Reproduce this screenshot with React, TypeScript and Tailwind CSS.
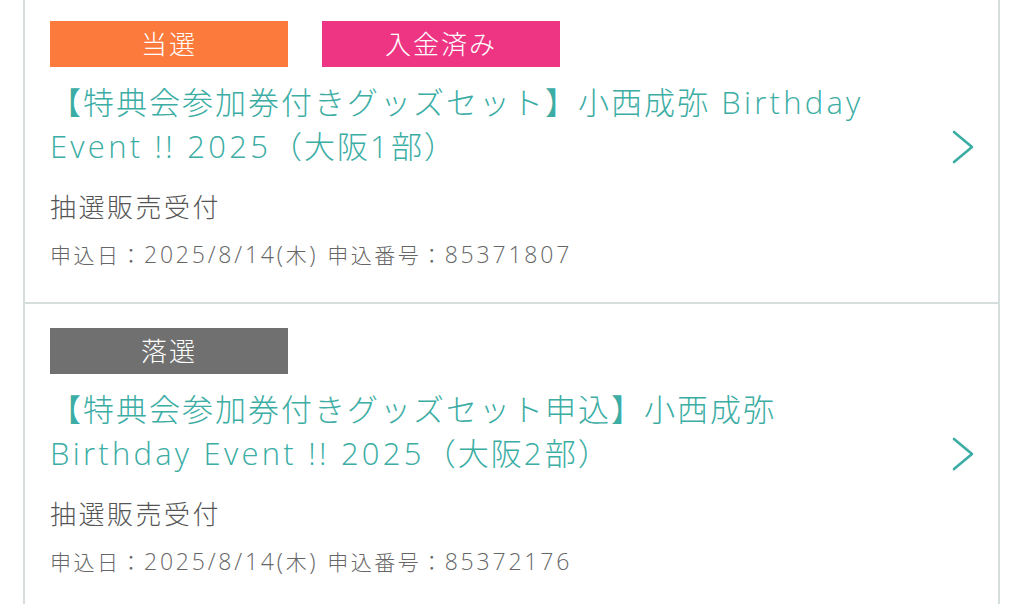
import React from 'react';

interface Badge {
  label: string;
  color: string;
}

interface Entry {
  badges: Badge[];
  titleLines: string[];
  kind: string;
  date: string;
  number: string;
}

const entries: Entry[] = [
  {
    badges: [
      { label: '当選', color: 'bg-[#fd7a3d]' },
      { label: '入金済み', color: 'bg-[#ee3584]' },
    ],
    titleLines: ['【特典会参加券付きグッズセット】小西成弥 Birthday', 'Event !! 2025（大阪1部）'],
    kind: '抽選販売受付',
    date: '2025/8/14(木)',
    number: '85371807',
  },
  {
    badges: [{ label: '落選', color: 'bg-[#707070]' }],
    titleLines: ['【特典会参加券付きグッズセット申込】小西成弥', 'Birthday Event !! 2025（大阪2部）'],
    kind: '抽選販売受付',
    date: '2025/8/14(木)',
    number: '85372176',
  },
];

// Latin runs get wider letter spacing than kana/kanji, the way the app's font sets them
const Mixed: React.FC<{ text: string; latin: string }> = ({ text, latin }) => (
  <>
    {text.split(/([\u3000-\u9fff\uff00-\uffef]+)/).map((part, i) =>
      /[\u3000-\u9fff\uff00-\uffef]/.test(part) ? (
        <span key={i}>{part}</span>
      ) : (
        <span key={i} className={latin}>
          {part}
        </span>
      )
    )}
  </>
);

const Chevron = () => (
  <svg width="22" height="34" viewBox="0 0 22 34" fill="none" className="shrink-0 mt-[2px]">
    <path d="M2 2 L20 17 L2 32" stroke="#3bada4" strokeWidth="2.6" strokeLinecap="round" strokeLinejoin="round" />
  </svg>
);

const EntryCard: React.FC<{ entry: Entry }> = ({ entry }) => (
  <div className="flex items-center border-b-2 border-[#d5dedd] pl-[25px] pr-[24px] pt-[24px] pb-[31px]">
    <div className="flex-1 min-w-0">
      {/* Status badges */}
      <div className="flex gap-[34px]">
        {entry.badges.map((b) => (
          <div
            key={b.label}
            className={`${b.color} w-[238px] h-[46px] flex items-center justify-center text-white text-[26px] tracking-[2px]`}
          >
            {b.label}
          </div>
        ))}
      </div>

      <p className="mt-[13px] text-[31px] leading-[44px] tracking-[2px] text-[#3bada4] whitespace-nowrap">
        <Mixed text={entry.titleLines[0]} latin="tracking-[3.25px]" />
        <br />
        <Mixed text={entry.titleLines[1]} latin="tracking-[3.25px]" />
      </p>

      <p className="mt-[19px] text-[26px] leading-[40px] tracking-[2.5px] text-[#555555]">{entry.kind}</p>

      <p className="mt-[11px] text-[21px] leading-[32px] tracking-[2.5px] text-[#666666] whitespace-nowrap">
        <Mixed text={`申込日：${entry.date} 申込番号：${entry.number}`} latin="text-[23px] tracking-[2.8px]" />
      </p>
    </div>
    <Chevron />
  </div>
);

export default function App() {
  return (
    <div
      className="w-[1024px] h-[604px] overflow-hidden bg-white font-light"
      style={{ fontFamily: '"Open Sans", "Noto Sans CJK JP", sans-serif' }}
    >
      <div className="ml-[23px] mr-[24px] -mt-[3px] border-x-2 border-[#d5dedd]">
        {entries.map((e) => (
          <EntryCard key={e.number} entry={e} />
        ))}
      </div>
    </div>
  );
}
